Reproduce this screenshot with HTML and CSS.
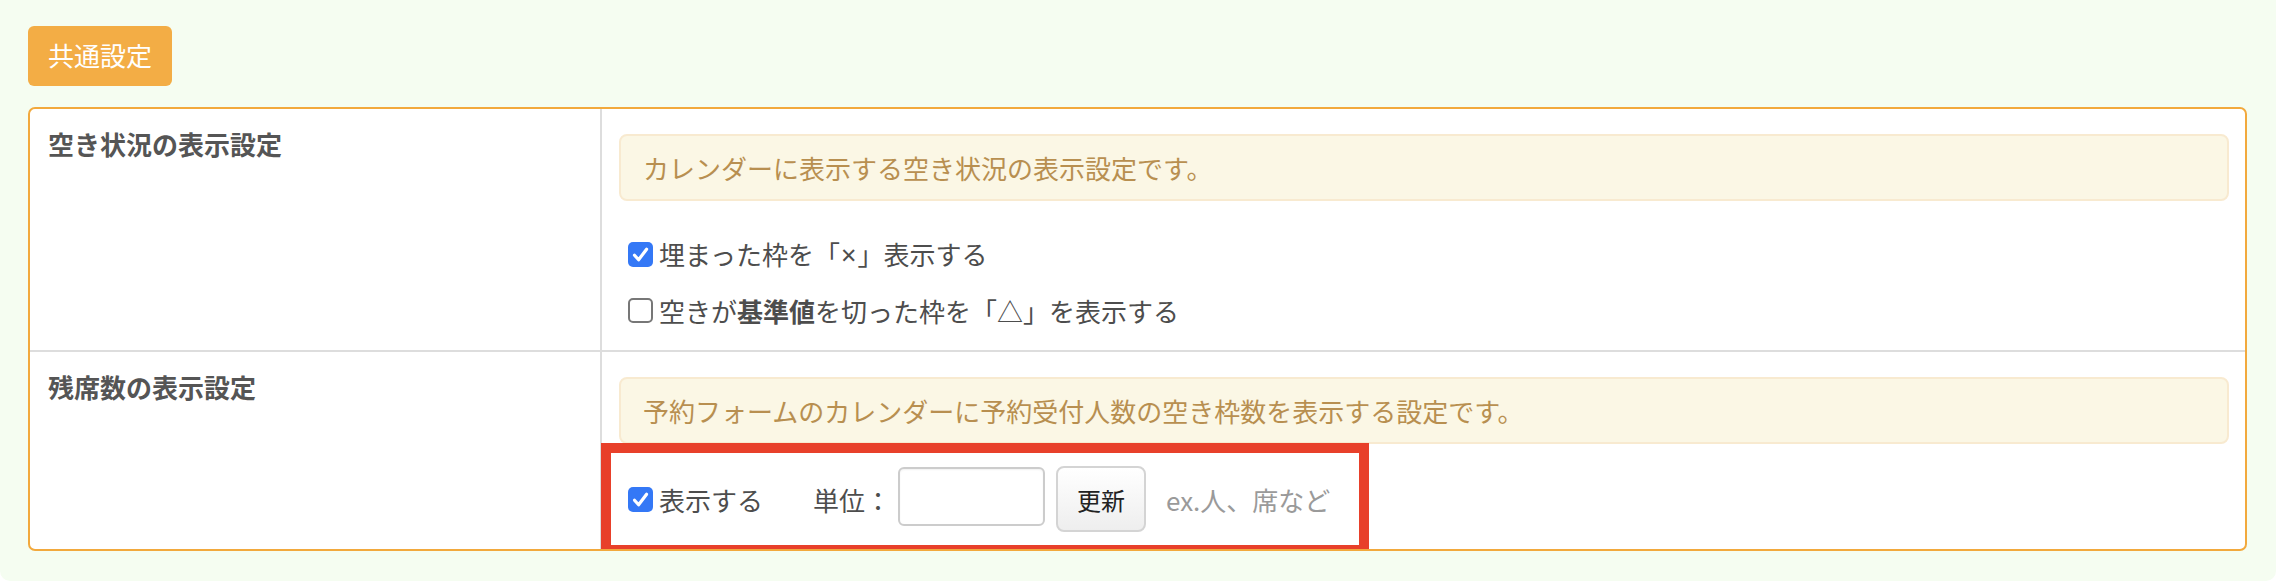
FILE: index.html
```html
<!DOCTYPE html>
<html lang="ja">
<head>
<meta charset="utf-8">
<title>共通設定</title>
<link rel="stylesheet" href="styles.css">
</head>
<body>
<div class="panel">
  <div class="tab">共通設定</div>
  <div class="settings">
    <div class="label-cell">空き状況の表示設定</div>
    <div class="field-cell">
      <div class="notice">カレンダーに表示する空き状況の表示設定です。</div>
      <label class="check-line">
        <span class="cb cb-on"><svg viewBox="0 0 25 25" width="25" height="25"><path d="M6.5 13.2 L10.6 17.8 L18.6 7.2" fill="none" stroke="#fff" stroke-width="3.2" stroke-linecap="round" stroke-linejoin="round"/></svg></span>
        <span>埋まった枠を「<span class="times">×</span>」表示する</span>
      </label>
      <label class="check-line">
        <span class="cb"></span>
        <span>空きが<b>基準値</b>を切った枠を「△」を表示する</span>
      </label>
    </div>

    <div class="label-cell row-sep">残席数の表示設定</div>
    <div class="field-cell row-sep">
      <div class="notice">予約フォームのカレンダーに予約受付人数の空き枠数を表示する設定です。</div>
      <div class="controls">
        <label class="check-inline">
          <span class="cb cb-on"><svg viewBox="0 0 25 25" width="25" height="25"><path d="M6.5 13.2 L10.6 17.8 L18.6 7.2" fill="none" stroke="#fff" stroke-width="3.2" stroke-linecap="round" stroke-linejoin="round"/></svg></span>
          <span>表示する</span>
        </label>
        <span class="unit-label">単位：</span>
        <input class="unit-input" type="text" value="">
        <button class="update-btn" type="button">更新</button>
        <span class="hint">ex.人、席など</span>
      </div>
      <div class="highlight"></div>
    </div>
  </div>
</div>
</body>
</html>
```

FILE: styles.css
```css
* {
  box-sizing: border-box;
}

html, body {
  margin: 0;
  padding: 0;
  background: #ffffff;
}

body {
  font-family: "Noto Sans CJK JP", "Noto Sans", sans-serif;
  color: #4d4d4d;
  font-size: 26px;
}

.panel {
  width: 2276px;
  height: 581px;
  background: #f5fdf1;
  border-radius: 0 0 10px 10px;
  padding: 26px 29px 30px 28px;
}

.tab {
  display: inline-block;
  height: 60px;
  line-height: 58px;
  padding: 0 20px;
  background: #f3ad45;
  color: #ffffff;
  font-size: 26px;
  border-radius: 6px;
  margin-bottom: 21px;
}

.settings {
  display: grid;
  grid-template-columns: 570px 1fr;
  grid-template-rows: 241px 199px;
  background: #ffffff;
  border: 2px solid #f2a93d;
  border-radius: 7px;
  overflow: hidden;
}

.label-cell {
  padding: 16px 18px;
  font-weight: 700;
  line-height: 37px;
  color: #555555;
}

.field-cell {
  position: relative;
  border-left: 2px solid #dddddd;
  padding: 25px 16px 12px 17px;
}

.row-sep {
  border-top: 2px solid #dddddd;
}

.notice {
  height: 67px;
  background: #fbf7e5;
  border: 2px solid #f8ead0;
  border-radius: 8px;
  padding: 13px 22px;
  line-height: 37px;
  color: #b88f50;
}

.check-line {
  display: flex;
  align-items: center;
  height: 56px;
  padding-left: 9px;
}

.notice + .check-line {
  margin-top: 25px;
}

.times {
  font-family: "Noto Sans", sans-serif;
  font-size: 27px;
  padding: 0 1px;
}

.check-line b {
  font-weight: 700;
  color: #4d4d4d;
}

.cb {
  flex: none;
  width: 25px;
  height: 25px;
  margin-right: 6px;
  border-radius: 5px;
  border: 2px solid #777777;
  background: #ffffff;
  display: inline-flex;
}

.cb-on {
  border: none;
  background: #3478f6;
}

.cb svg {
  display: block;
}

.controls {
  display: flex;
  align-items: center;
  height: 66px;
  margin-top: 22px;
  padding-left: 9px;
}

.check-inline {
  display: flex;
  align-items: center;
}

.unit-label {
  margin-left: 50px;
}

.unit-input {
  width: 147px;
  height: 59px;
  margin: -5px 0 0 7px;
  border: 2px solid #cccccc;
  border-radius: 6px;
  background: #ffffff;
  box-shadow: inset 0 1px 2px rgba(0, 0, 0, 0.06);
  font-family: inherit;
  font-size: 24px;
  padding: 0 8px;
}

.update-btn {
  width: 90px;
  height: 66px;
  margin-left: 11px;
  border: 2px solid #d4d4d4;
  border-radius: 8px;
  background: linear-gradient(#ffffff, #eeeeee);
  font-family: inherit;
  font-size: 24px;
  color: #222222;
  padding: 0;
}

.hint {
  margin-left: 20px;
  color: #9a9a9a;
}

.highlight {
  position: absolute;
  left: -1px;
  top: 91px;
  width: 768px;
  height: 112px;
  border: 10px solid #e8402a;
  pointer-events: none;
}
```
